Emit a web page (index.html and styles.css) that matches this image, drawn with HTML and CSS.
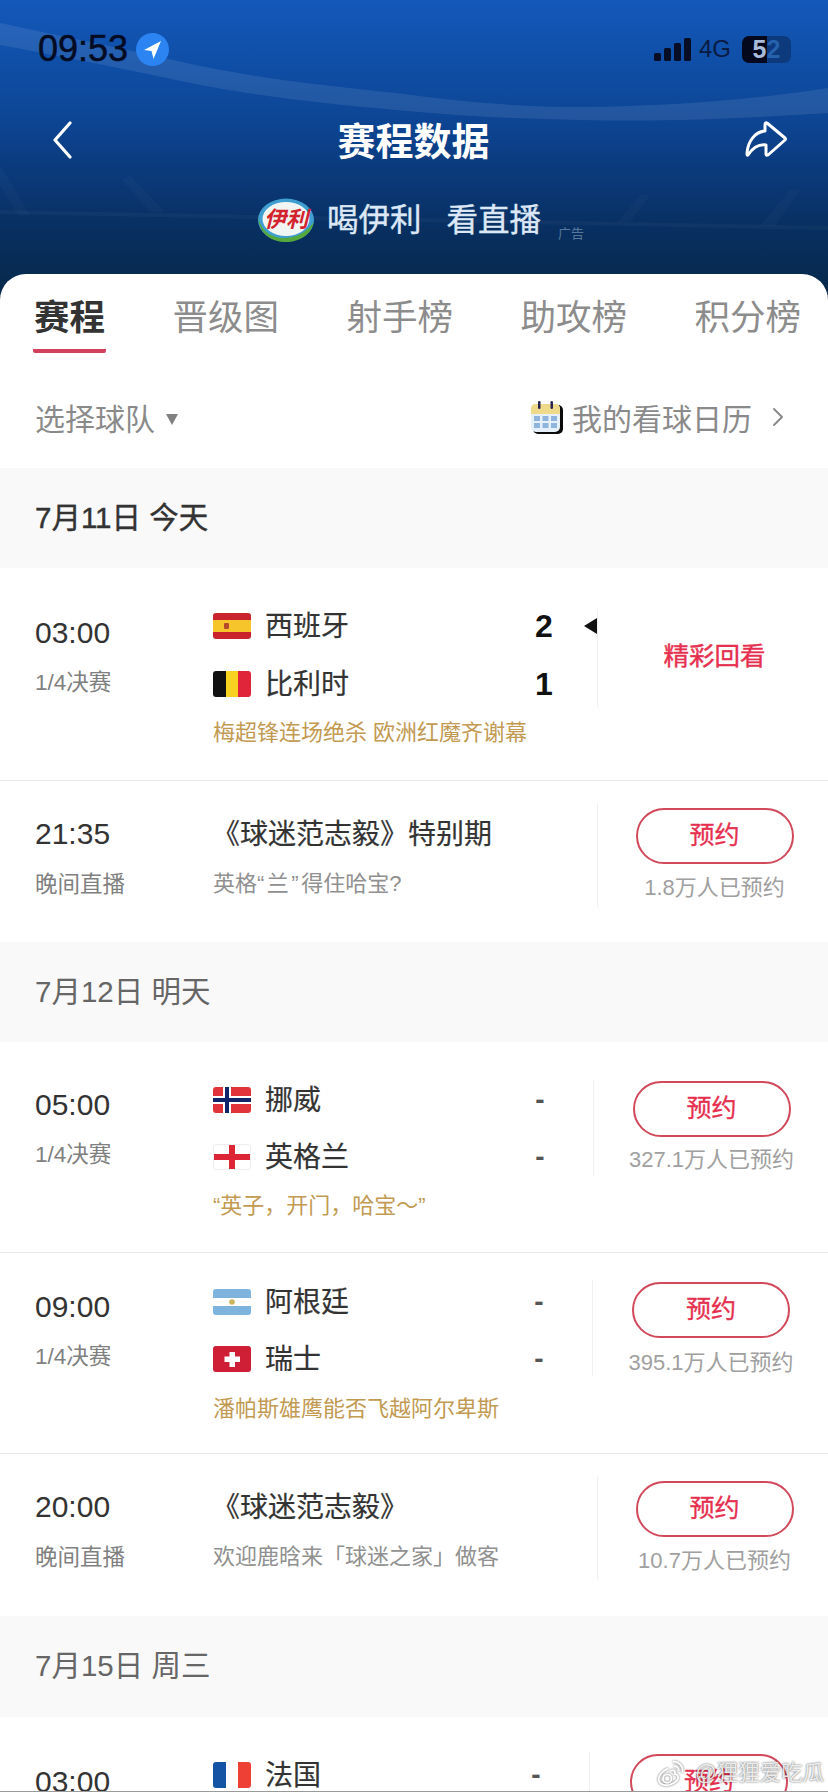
FILE: index.html
```html
<!DOCTYPE html>
<html lang="zh">
<head>
<meta charset="utf-8">
<title>赛程数据</title>
<link rel="stylesheet" href="styles.css">
</head>
<body>
<div class="app">
  <svg class="swoosh" viewBox="0 0 828 274" width="828" height="274" aria-hidden="true">
    <path d="M0 23 C70 38 130 50 200 66 C270 80 330 86 396 93 C460 102 520 107 580 107 C670 106 750 100 828 88 L828 113 C750 118 670 122 580 120 C520 119 460 116 396 110 C330 104 270 98 200 85 C130 70 70 58 0 45Z" fill="#fff" opacity=".09"/>
    <path d="M0 210 L828 226 L828 230 L0 214Z" fill="#fff" opacity=".03"/>
    <path d="M0 165 L30 215 L18 215 L0 185Z M130 175 L165 212 L150 212 L122 180Z M650 195 L630 222 L618 222 L640 195Z M800 190 L775 226 L760 226 L790 190Z" fill="#fff" opacity=".025"/>
  </svg>
  <header class="top">
    <div class="status">
      <div class="status-left">
        <span class="clock">09:53</span>
        <svg class="loc" viewBox="0 0 33 33" width="33" height="33"><circle cx="16.5" cy="16.5" r="16.5" fill="#2b84f2"/><path d="M25 8 L8 17 L15.5 18 L17.5 26Z" fill="#fff"/></svg>
      </div>
      <div class="status-right">
        <svg class="signal" viewBox="0 0 37 23" width="37" height="23"><rect x="0" y="15" width="7" height="8" rx="1.5"/><rect x="10" y="10" width="7" height="13" rx="1.5"/><rect x="20" y="5" width="7" height="18" rx="1.5"/><rect x="30" y="0" width="7" height="23" rx="1.5"/></svg>
        <span class="net">4G</span>
        <span class="battery"><span class="bat-a">5</span><span class="bat-b">2</span></span>
      </div>
    </div>
    <nav class="nav">
      <svg class="back" viewBox="0 0 20 38" width="20" height="38"><path d="M18 2 L3 19 L18 36" fill="none" stroke="#fff" stroke-width="3.2" stroke-linecap="round" stroke-linejoin="round"/></svg>
      <h1 class="title">赛程数据</h1>
      <svg class="share" viewBox="0 0 42 36" width="42" height="36"><path d="M22 2 L40 17 Q41 18 40 19 L23 34 Q21 35 21 33 L21 24 C13 23 7 28 3 34 Q2 35 2 32 C3 20 10 11 20 10 L20 4 Q20 1 22 2Z" fill="none" stroke="#fff" stroke-width="3" stroke-linejoin="round"/></svg>
    </nav>
    <div class="sponsor">
      <svg class="yili" viewBox="0 0 56 44" width="56" height="44">
        <ellipse cx="28" cy="22" rx="28" ry="21.5" fill="#3f9fd0"/>
        <path d="M0.5 20 C1 36 14 44 28 44 C42 44 54 36 55.5 24 C48 36 36 40 26 40 C12 40 3 32 0.5 20Z" fill="#55a83c"/>
        <ellipse cx="28" cy="21" rx="23.5" ry="17" fill="#f2f6f2"/>
        <text class="yili-text" x="28" y="29">伊利</text>
      </svg>
      <span class="slogan">喝伊利</span>
      <span class="slogan">看直播</span>
      <span class="ad">广告</span>
    </div>
  </header>

  <main class="panel">
    <div class="tabs">
      <span class="tab tab-active">赛程</span>
      <span class="tab">晋级图</span>
      <span class="tab">射手榜</span>
      <span class="tab">助攻榜</span>
      <span class="tab">积分榜</span>
    </div>
    <div class="filters">
      <div class="pick"><span>选择球队</span><i class="caret"></i></div>
      <div class="calendar">
        <svg class="cal-icon" viewBox="0 0 32 33" width="32" height="33">
          <rect x="2" y="4" width="30" height="29" rx="5" fill="#0b0b0b"/>
          <rect x="0" y="3" width="29" height="28" rx="5" fill="#e6f0fa"/>
          <path d="M0 13 V8 Q0 3 5 3 H24 Q29 3 29 8 V13Z" fill="#efd98a"/>
          <rect x="7" y="0" width="2.5" height="8" rx="1.2" fill="#2a2550"/>
          <rect x="19.5" y="0" width="2.5" height="8" rx="1.2" fill="#2a2550"/>
          <g fill="#8fb5de"><rect x="3" y="15" width="6" height="5"/><rect x="11.5" y="15" width="6" height="5"/><rect x="20" y="15" width="6" height="5"/><rect x="3" y="22" width="6" height="5"/><rect x="11.5" y="22" width="6" height="5"/><rect x="20" y="22" width="6" height="5"/></g>
        </svg>
        <span>我的看球日历</span>
        <svg class="cal-arrow" viewBox="0 0 12 20" width="12" height="20"><path d="M2 2 L10 10 L2 18" fill="none" stroke="#8a8a8a" stroke-width="2" stroke-linecap="round" stroke-linejoin="round"/></svg>
      </div>
    </div>

    <h2 class="day day-today">7月11日 今天</h2>
    <section class="match match-first">
      <div class="when"><div class="time">03:00</div><div class="label">1/4决赛</div></div>
      <div class="body">
        <div class="team">
          <svg class="flag" viewBox="0 0 38 26"><rect width="38" height="26" fill="#c9242b"/><rect y="7" width="38" height="12" fill="#f6c42b"/><rect x="11" y="10" width="5" height="6" rx="1" fill="#b4482a"/></svg>
          <span class="name">西班牙</span><span class="score score-on">2</span>
          <i class="mark"></i>
        </div>
        <div class="team">
          <svg class="flag" viewBox="0 0 38 26"><rect width="13" height="26" fill="#111"/><rect x="13" width="12" height="26" fill="#f7d21e"/><rect x="25" width="13" height="26" fill="#e0243a"/></svg>
          <span class="name">比利时</span><span class="score score-on">1</span>
        </div>
        <p class="note">梅超锋连场绝杀 欧洲红魔齐谢幕</p>
      </div>
      <div class="side side-a side-replay"><span class="replay">精彩回看</span></div>
    </section>
    <section class="match show">
      <div class="when"><div class="time">21:35</div><div class="label">晚间直播</div></div>
      <div class="body">
        <div class="show-title">《球迷范志毅》特别期</div>
        <p class="show-sub">英格<span class="quoted">“兰”</span>得住哈宝?</p>
      </div>
      <div class="side side-a"><span class="btn">预约</span><span class="count">1.8万人已预约</span></div>
    </section>

    <h2 class="day">7月12日 明天</h2>
    <section class="match match-first match-second">
      <div class="when when-up"><div class="time">05:00</div><div class="label">1/4决赛</div></div>
      <div class="body">
        <div class="team team-tight">
          <svg class="flag" viewBox="0 0 38 26"><rect width="38" height="26" fill="#e0343a"/><rect x="10" width="8" height="26" fill="#fff"/><rect y="9" width="38" height="8" fill="#fff"/><rect x="12" width="4" height="26" fill="#12246a"/><rect y="11" width="38" height="4" fill="#12246a"/></svg>
          <span class="name">挪威</span><span class="score">-</span>
        </div>
        <div class="team">
          <svg class="flag flag-line" viewBox="0 0 38 26"><rect width="38" height="26" fill="#fff"/><rect x="16" width="6" height="26" fill="#dc2535"/><rect y="10" width="38" height="6" fill="#dc2535"/></svg>
          <span class="name">英格兰</span><span class="score">-</span>
        </div>
        <p class="note">“英子，开门，哈宝～”</p>
      </div>
      <div class="side side-b"><span class="btn">预约</span><span class="count">327.1万人已预约</span></div>
    </section>
    <section class="match">
      <div class="when when-up2"><div class="time">09:00</div><div class="label">1/4决赛</div></div>
      <div class="body">
        <div class="team team-tight">
          <svg class="flag" viewBox="0 0 38 26"><rect width="38" height="26" fill="#7eb3de"/><rect y="9" width="38" height="8" fill="#fff"/><circle cx="19" cy="13" r="2.8" fill="#cdb35a"/></svg>
          <span class="name">阿根廷</span><span class="score">-</span>
        </div>
        <div class="team">
          <svg class="flag" viewBox="0 0 38 26"><rect width="38" height="26" fill="#cf1f36"/><rect x="16.5" y="6" width="5.5" height="15" fill="#fff"/><rect x="11.5" y="10.5" width="15.5" height="5.5" fill="#fff"/></svg>
          <span class="name">瑞士</span><span class="score">-</span>
        </div>
        <p class="note note-down">潘帕斯雄鹰能否飞越阿尔卑斯</p>
      </div>
      <div class="side side-c"><span class="btn">预约</span><span class="count">395.1万人已预约</span></div>
    </section>
    <section class="match show show-end">
      <div class="when"><div class="time">20:00</div><div class="label">晚间直播</div></div>
      <div class="body">
        <div class="show-title">《球迷范志毅》</div>
        <p class="show-sub">欢迎鹿晗来「球迷之家」做客</p>
      </div>
      <div class="side side-a"><span class="btn">预约</span><span class="count">10.7万人已预约</span></div>
    </section>

    <h2 class="day day-last">7月15日 周三</h2>
    <section class="match match-first match-cut">
      <div class="when"><div class="time">03:00</div></div>
      <div class="body">
        <div class="team">
          <svg class="flag" viewBox="0 0 38 26"><rect width="13" height="26" fill="#1553a4"/><rect x="13" width="12" height="26" fill="#fff"/><rect x="25" width="13" height="26" fill="#ee4034"/></svg>
          <span class="name">法国</span><span class="score">-</span>
        </div>
      </div>
      <div class="side side-d"><span class="btn">预约</span></div>
    </section>
  </main>

  <div class="watermark">
    <svg class="wb" viewBox="0 0 32 32" width="30" height="30"><path d="M13 11 C6 14 2 20 3 24 C4 29 11 30 16 28 C22 26 25 22 23 19 C22 17 20 17 20 17 C21 14 19 12 15 14" fill="none" stroke="#fff" stroke-width="2"/><circle cx="12" cy="22" r="4.5" fill="none" stroke="#fff" stroke-width="2"/><path d="M18 4 C24 3 30 9 28 16 M19 9 C22 8 25 11 24 14" fill="none" stroke="#fff" stroke-width="2"/></svg>
    <span class="wm-text">@狸狸爱吃瓜</span>
  </div>
</div>
</body>
</html>
```
FILE: styles.css
```css
* { box-sizing: border-box; }
html, body { margin: 0; padding: 0; background: #fff; }
body { font-family: "Liberation Sans", "Noto Sans CJK SC", sans-serif; color: #333; }
h1, h2, p { margin: 0; font-weight: 400; }

.app {
  position: relative;
  width: 828px;
  height: 1792px;
  overflow: hidden;
  background: linear-gradient(180deg, #1458b9 0, #0f4fa8 60px, #0d4594 120px, #0b3a7c 170px, #082f60 230px, #062848 300px);
}
.app::after {
  content: "";
  position: absolute;
  left: 0;
  right: 0;
  bottom: 0;
  height: 1px;
  background: #9a9a9a;
}
.swoosh { position: absolute; left: 0; top: 0; }

.top { position: relative; height: 274px; padding-bottom: 16px; }

.status { display: flex; justify-content: space-between; align-items: center; height: 98px; padding: 0 37px 0 38px; }
.status-left { display: flex; align-items: center; gap: 8px; }
.clock { font-size: 36px; line-height: 40px; color: #050b22; font-weight: 400; -webkit-text-stroke: .5px #050b22; }
.status-right { display: flex; align-items: center; }
.signal { fill: #070d24; margin-right: 8px; }
.net { font-size: 24px; color: #0a1b42; width: 43px; }
.battery {
  position: relative;
  display: flex;
  justify-content: center;
  align-items: center;
  width: 49px;
  height: 27px;
  border-radius: 7px;
  font-size: 25px;
  font-weight: 700;
  background: linear-gradient(90deg, #03081c 52%, #0d3a7c 52%);
}
.bat-a { color: #a9bcd9; }
.bat-b { color: #2561ad; }

.nav { display: flex; justify-content: space-between; align-items: center; height: 84px; padding: 0 41px 0 52px; }
.title { font-size: 38px; line-height: 44px; font-weight: 700; color: #fff; margin: 3px 0 0 10px; }
.share { margin-bottom: 2px; }

.sponsor { display: flex; align-items: center; height: 76px; padding-left: 258px; }
.yili { flex: none; margin-right: 13px; }
.yili-text { font-size: 22px; font-weight: 700; font-style: italic; fill: #d3232f; text-anchor: middle; }
.slogan { font-size: 31.5px; line-height: 40px; color: #dce8f5; margin: -1px 25px 0 0; -webkit-text-stroke: .4px #dce8f5; }
.ad { font-size: 13px; color: #56789c; margin: 24px 0 0 -8px; }

.panel { position: relative; height: 1518px; background: #fff; border-radius: 26px 26px 0 0; }

.tabs { display: flex; gap: 67.5px; padding: 26px 0 0 34px; font-size: 35.5px; line-height: 36px; color: #8c8c8c; }
.tab { height: 53px; white-space: nowrap; }
.tab-active { color: #333; font-weight: 700; border-bottom: 4px solid #d2405c; border-radius: 0 0 2px 2px; margin: 0 -1px; padding: 0 1px; }

.filters { display: flex; justify-content: space-between; align-items: center; height: 115px; padding: 13px 44px 0 35px; font-size: 30px; color: #8a8a8a; }
.pick { display: flex; align-items: center; gap: 11px; }
.caret { width: 0; height: 0; margin-top: 4px; border-left: 6px solid transparent; border-right: 6px solid transparent; border-top: 11px solid #808080; }
.calendar { display: flex; align-items: center; gap: 9px; }
.cal-arrow { margin-left: 11px; }

.day { height: 100px; padding-left: 35px; background: #f9f9f9; font-size: 29.5px; line-height: 100px; color: #666; }
.day-today { color: #333; -webkit-text-stroke: .4px #333; }
.day-last { height: 101px; }

.match { display: flex; align-items: flex-start; padding-top: 33px; height: 201px; border-bottom: 1px solid #e8e8e8; }
.match-first { padding-top: 42px; height: 213px; }
.match-second { height: 211px; }
.match-cut { border-bottom: 0; height: 75px; }
.show { height: 161px; padding-top: 22px; border-bottom: 0; }
.show-end { height: 162px; }

.when { flex: none; width: 213px; padding: 5px 0 0 35px; }
.when-up { padding-top: 3px; }
.when-up2 { padding-top: 3px; }
.show .when { padding-top: 13px; }
.time { font-size: 30px; line-height: 36px; color: #333; }
.label { margin-top: 17px; font-size: 22.5px; line-height: 30px; color: #808080; }
.show .label { margin-top: 18px; }

.body { flex: 1; min-width: 0; }
.team { position: relative; display: flex; align-items: center; height: 32px; margin-bottom: 26px; padding-right: 43px; }
.team-tight { margin-bottom: 25px; }
.flag { flex: none; width: 38px; height: 26px; border-radius: 3px; }
.flag-line { outline: 1px solid #eee; outline-offset: -1px; }
.name { flex: 1; margin-left: 14px; font-size: 28px; line-height: 32px; color: #333; position: relative; top: 1px; -webkit-text-stroke: .2px #333; }
.score { width: 20px; text-align: center; font-size: 28px; font-weight: 700; color: #555; }
.score-on { font-size: 32px; color: #111; }
.mark { position: absolute; right: 0; top: 8px; width: 0; height: 0; border-top: 8px solid transparent; border-bottom: 8px solid transparent; border-right: 13px solid #111; }
.note { margin-top: -8px; font-size: 22px; line-height: 30px; color: #c29a52; white-space: nowrap; }
.note-down { margin-top: -7px; }

.show-title { padding-top: 13px; font-size: 28px; line-height: 38px; color: #333; -webkit-text-stroke: .2px #333; white-space: nowrap; margin-left: -1px; }
.show-sub { margin-top: 15px; font-size: 22px; line-height: 30px; color: #909090; white-space: nowrap; }
.quoted { letter-spacing: 2.5px; }

.side { flex: none; display: flex; flex-direction: column; align-items: center; height: 104px; border-left: 1px solid #f0f0f0; padding: 5px 0 0 3px; }
.side-a { width: 231px; }
.side-b { width: 235px; margin-top: -4px; padding: 1px 0 0 1px; height: 96px; }
.side-b .count { margin-top: 8px; }
.side-c { width: 236px; margin-top: -6px; padding: 2px 0 0 1px; height: 96px; }
.side-c .count { margin-top: 10px; }
.side-d { width: 239px; margin-top: -7px; padding: 2px 0 0; }
.side-replay { height: 97px; padding: 0 0 10px 3px; justify-content: center; }
.replay { font-size: 25.5px; color: #e6304f; -webkit-text-stroke: .4px #e6304f; }
.btn { flex: none; display: block; width: 158px; height: 56px; border: 2px solid #d1495b; border-radius: 28px; text-align: center; font-size: 25px; line-height: 50px; color: #e6304f; -webkit-text-stroke: .3px #e6304f; }
.count { margin-top: 9px; font-size: 22px; line-height: 30px; color: #a0a0a0; white-space: nowrap; }

.watermark { position: absolute; left: 656px; top: 1757px; display: flex; align-items: center; gap: 9px; white-space: nowrap; }
.wb { flex: none; opacity: .85; filter: drop-shadow(0 0 1px rgba(0,0,0,.7)); }
.wm-text { font-size: 21.5px; line-height: 32px; color: rgba(255,255,255,.85); text-shadow: 0 0 2px rgba(0,0,0,.7); }
```
